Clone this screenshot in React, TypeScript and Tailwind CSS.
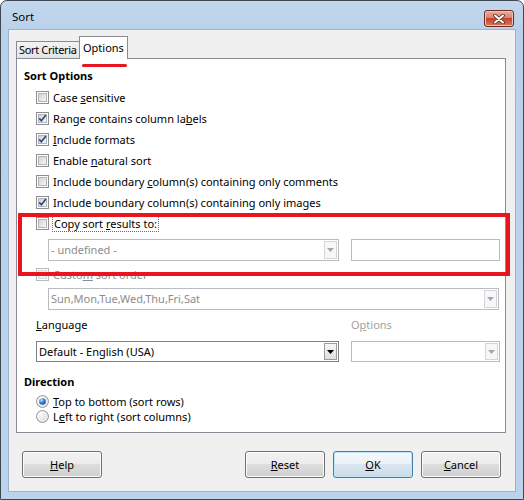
import React from 'react';

const font = "font-['Noto_Sans','Open_Sans',sans-serif]";

function Check({ checked, disabled }: { checked?: boolean; disabled?: boolean }) {
  return (
    <span
      className={`relative flex w-[13px] h-[13px] shrink-0 items-center justify-center border bg-white ${
        disabled ? 'border-[#b8babc]' : 'border-[#8e8f8f]'
      }`}
    >
      <span
        className={`block w-[9px] h-[9px] border ${
          disabled
            ? 'border-[#d6d8da] bg-[#f4f4f4]'
            : 'border-[#b3b5b8] bg-[linear-gradient(135deg,#d0d3d8,#f6f6f6)]'
        }`}
      />
      {checked && (
        <svg className="absolute left-0 top-0" width="11" height="11" viewBox="0 0 11 11">
          <path d="M2.2 5.4 L4.4 7.8 L8.9 2" fill="none" stroke="#2b4a8b" strokeWidth="1.7" />
        </svg>
      )}
    </span>
  );
}

function Radio({ on }: { on?: boolean }) {
  return (
    <svg width="13" height="13" viewBox="0 0 13 13" className="shrink-0">
      <defs>
        <radialGradient id="rbg" cx="0.35" cy="0.3" r="0.8">
          <stop offset="0" stopColor="#ffffff" />
          <stop offset="1" stopColor="#cfd3d8" />
        </radialGradient>
        <radialGradient id="rdot" cx="0.35" cy="0.3" r="0.75">
          <stop offset="0" stopColor="#bfe4ff" />
          <stop offset="0.5" stopColor="#3a86d6" />
          <stop offset="1" stopColor="#1b4d96" />
        </radialGradient>
      </defs>
      <circle cx="6.5" cy="6.5" r="5.9" fill="url(#rbg)" stroke="#8e8f8f" strokeWidth="1" />
      <circle cx="6.5" cy="6.5" r="4.6" fill="none" stroke="#ffffff" strokeWidth="0.8" />
      {on && <circle cx="6.5" cy="6.5" r="3.3" fill="url(#rdot)" />}
    </svg>
  );
}

function Arrow({ dark }: { dark?: boolean }) {
  return (
    <svg width="7" height="4" viewBox="0 0 7 4">
      <path d="M0 0 L7 0 L3.5 4 Z" fill={dark ? '#000000' : '#a5a7aa'} />
    </svg>
  );
}

function Combo({
  className,
  text,
  disabled,
}: {
  className: string;
  text?: string;
  disabled?: boolean;
}) {
  return (
    <div
      className={`flex items-stretch border bg-white ${
        disabled ? 'border-[#b9bcc0]' : 'border-[#7d8188]'
      } ${className}`}
    >
      <div
        className={`flex-1 flex items-center pl-[2px] ${
          disabled ? 'text-[#8d8d8d]' : 'text-black'
        }`}
      >
        {text}
      </div>
      <div
        className={`my-[1px] mr-[1px] w-[13px] flex items-center justify-center border ${
          disabled
            ? 'border-[#d3d5d8] bg-[#f7f7f7]'
            : 'border-[#9a9ea4] bg-[linear-gradient(#f6f6f6,#dedede)]'
        }`}
      >
        <Arrow dark={!disabled} />
      </div>
    </div>
  );
}

function Btn({ children, focus }: { children: React.ReactNode; focus?: boolean }) {
  return (
    <div
      className={`w-[80px] h-[27px] flex items-center justify-center rounded-[3px] border text-black ${
        focus
          ? 'border-[#3c7fb1] shadow-[inset_0_0_0_1px_#bfe6fb] bg-[linear-gradient(#f4f8fb,#eaf2f8_50%,#d9e6f0_50%,#cddbe6)]'
          : 'border-[#707070] shadow-[inset_0_0_0_1px_#fbfbfb] bg-[linear-gradient(#f2f2f2,#ebebeb_50%,#dddddd_50%,#cfcfcf)]'
      }`}
    >
      {children}
    </div>
  );
}

function CheckRow({
  children,
  checked,
  disabled,
}: {
  children: React.ReactNode;
  checked?: boolean;
  disabled?: boolean;
}) {
  return (
    <div className="h-[21px] flex items-center pl-[19px] gap-[4px]">
      <Check checked={checked} disabled={disabled} />
      <span className={disabled ? 'text-[#8d8d8d]' : 'text-black'}>{children}</span>
    </div>
  );
}

export default function App() {
  return (
    <div
      className={`relative w-[524px] h-[500px] flex flex-col border border-[#3f4852] rounded-t-[7px] bg-[linear-gradient(#c2d7ed,#b9d1ea_30px,#bcd3eb)] text-[11px] leading-[16px] ${font}`}
    >
      {/* title bar */}
      <div className="h-[28px] flex items-start justify-between pl-[11px] pr-[9px]">
        <span className="mt-[8px] text-[11.5px] text-black">Sort</span>
        <div className="mt-[9px] w-[30px] h-[17px] rounded-[3px] border border-[#6e2a1e] bg-[linear-gradient(#e8ad9f,#d78572_45%,#c3452b_50%,#d3785f)] flex items-center justify-center shadow-[inset_0_0_0_1px_#f0c3b8]">
          <svg width="12" height="10" viewBox="0 0 12 10">
            <path d="M2 1.5 L10 8.5 M10 1.5 L2 8.5" stroke="#5a2319" strokeWidth="3.6" strokeLinecap="round" />
            <path d="M2 1.5 L10 8.5 M10 1.5 L2 8.5" stroke="#ffffff" strokeWidth="2" strokeLinecap="round" />
          </svg>
        </div>
      </div>

      {/* client area */}
      <div className="mx-[7px] mb-[7px] flex-1 flex flex-col border border-[#9db3ca] bg-[#f0f0f0]">
        {/* tabs */}
        <div className="mt-[6px] ml-[7px] flex items-end h-[22px]">
          <div className="h-[17px] w-[64px] flex items-center pl-[2px] whitespace-nowrap overflow-hidden tracking-[-0.35px] border border-b-0 border-[#898c95] bg-[linear-gradient(#f3f3f3,#e4e4e4)] text-black">
            Sort Criteria
          </div>
          <div className="relative z-10 -ml-[1px] h-[23px] w-[49px] mb-[-1px] flex items-start pt-[3px] pl-[3px] border border-b-0 border-[#898c95] bg-white text-black">
            Options
          </div>
        </div>

        {/* panel */}
        <div className="ml-[7px] w-[490px] h-[375px] border border-[#898c95] bg-white flex flex-col">
          <div className="mt-[9px] pl-[7px] font-bold text-black">Sort Options</div>
          <div className="mt-[3px] flex flex-col">
            <CheckRow>
              Case <u>s</u>ensitive
            </CheckRow>
            <CheckRow checked>
              Range contains column la<u>b</u>els
            </CheckRow>
            <CheckRow checked>
              <u>I</u>nclude formats
            </CheckRow>
            <CheckRow>
              Enable <u>n</u>atural sort
            </CheckRow>
            <CheckRow>
              Include boundary <u>c</u>olumn(s) containing only comments
            </CheckRow>
            <CheckRow checked>Include boundary column(s) containing only images</CheckRow>
            <div className="h-[21px] flex items-center pl-[19px] gap-[3px]">
              <Check />
              <span className="border border-dotted border-[#6b6b6b] px-[1px] leading-[14px] text-black">
                Copy sort <u>r</u>esults to:
              </span>
            </div>
          </div>
          <div className="mt-[5px] ml-[31px] flex gap-[12px]">
            <Combo className="w-[291px] h-[22px]" text="- undefined -" disabled />
            <div className="w-[149px] h-[22px] border border-[#b9bcc0] bg-white" />
          </div>
          <div className="mt-[3px]">
            <CheckRow disabled>
              Custo<u>m</u> sort order
            </CheckRow>
          </div>
          <div className="mt-[3px] ml-[31px]">
            <Combo className="w-[451px] h-[22px]" text="Sun,Mon,Tue,Wed,Thu,Fri,Sat" disabled />
          </div>
          <div className="mt-[7px] flex">
            <span className="ml-[19px] w-[315px] text-black">
              <u>L</u>anguage
            </span>
            <span className="text-[#a0a0a0]">
              O<u>p</u>tions
            </span>
          </div>
          <div className="mt-[8px] ml-[19px] flex gap-[12px]">
            <Combo className="w-[303px] h-[21px]" text="Default - English (USA)" />
            <Combo className="w-[149px] h-[21px]" disabled />
          </div>
          <div className="mt-[12px] pl-[7px] font-bold text-black">Direction</div>
          <div className="mt-[4px] flex flex-col">
            <div className="h-[15px] flex items-center pl-[19px] gap-[4px] text-black">
              <Radio on />
              <span>
                <u>T</u>op to bottom (sort rows)
              </span>
            </div>
            <div className="h-[15px] flex items-center pl-[19px] gap-[4px] text-black">
              <Radio />
              <span>
                L<u>e</u>ft to right (sort columns)
              </span>
            </div>
          </div>
        </div>

        {/* buttons */}
        <div className="mt-[18px] flex items-center pl-[13px]">
          <Btn>
            <u>H</u>elp
          </Btn>
          <div className="ml-[143px] flex gap-[8px]">
            <Btn>
              <u>R</u>eset
            </Btn>
            <Btn focus>
              <u>O</u>K
            </Btn>
            <Btn>
              <u>C</u>ancel
            </Btn>
          </div>
        </div>
      </div>

      {/* red annotation marks */}
      <div className="absolute left-[81px] top-[63px] w-[45px] h-[3px] rounded-full bg-[#e8141e]" />
      <div className="absolute left-[17px] top-[212px] w-[492px] h-[63px] border-4 border-[#e8141e]" />
    </div>
  );
}
